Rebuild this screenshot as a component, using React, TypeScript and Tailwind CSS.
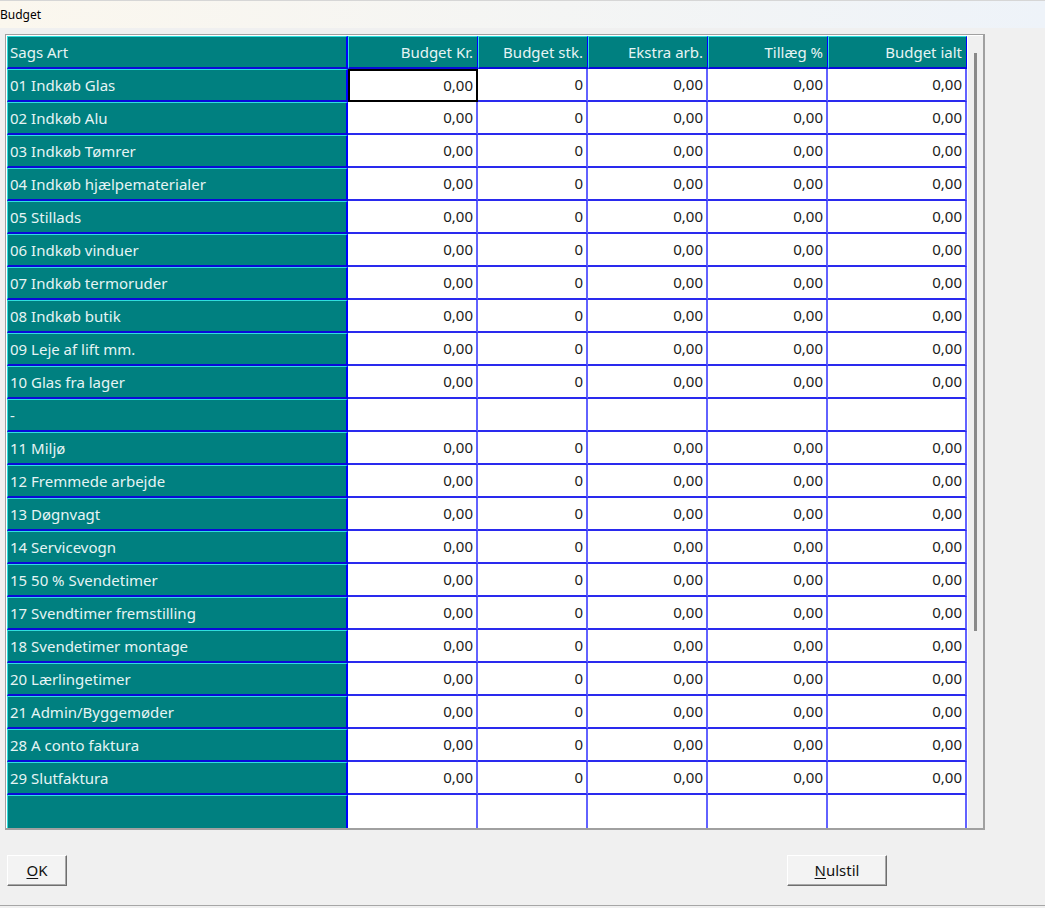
import React from "react";

type Row = { label: string; blank?: boolean };

const ROWS: Row[] = [
  { label: "01 Indkøb Glas" },
  { label: "02 Indkøb Alu" },
  { label: "03 Indkøb Tømrer" },
  { label: "04 Indkøb hjælpematerialer" },
  { label: "05 Stillads" },
  { label: "06 Indkøb vinduer" },
  { label: "07 Indkøb termoruder" },
  { label: "08 Indkøb butik" },
  { label: "09 Leje af lift mm." },
  { label: "10 Glas fra lager" },
  { label: "-", blank: true },
  { label: "11 Miljø" },
  { label: "12 Fremmede arbejde" },
  { label: "13 Døgnvagt" },
  { label: "14 Servicevogn" },
  { label: "15 50 % Svendetimer" },
  { label: "17 Svendtimer fremstilling" },
  { label: "18 Svendetimer montage" },
  { label: "20 Lærlingetimer" },
  { label: "21 Admin/Byggemøder" },
  { label: "28 A conto faktura" },
  { label: "29 Slutfaktura" },
  { label: "", blank: true },
];

const COLS = [
  { title: "Budget Kr.", w: "w-[130px]", value: "0,00" },
  { title: "Budget stk.", w: "w-[110px]", value: "0" },
  { title: "Ekstra arb.", w: "w-[120px]", value: "0,00" },
  { title: "Tillæg %", w: "w-[120px]", value: "0,00" },
  { title: "Budget ialt", w: "w-[139px]", value: "0,00" },
];

function Button({ label, className }: { label: string; className?: string }) {
  return (
    <button
      className={
        "flex h-[31px] items-center justify-center border border-t-white border-l-white border-r-[#6e6e6e] border-b-[#6e6e6e] bg-[#f3f3f3] text-[15px] text-[#111] shadow-[inset_-1px_-1px_0_#a8a8a8] " +
        (className ?? "")
      }
    >
      <span className="underline decoration-1 underline-offset-2 [text-decoration-skip-ink:none]">{label[0]}</span>
      {label.slice(1)}
    </button>
  );
}

export default function App() {
  const last = ROWS.length - 1;
  return (
    <div className="h-[908px] w-[1045px] overflow-hidden bg-[#f0f0f0] font-['Noto_Sans',sans-serif]">
      <div className="flex h-[28px] items-center border-t border-[#d6d6d6] bg-gradient-to-r from-[#fbf7ee] to-[#eef3f9] text-[12px] text-black">
        Budget
      </div>
      <div className="h-[878px] border-b border-[#a6a6a6] pt-[6px]">
        <div className="ml-[5px] flex h-[796px] w-[980px] overflow-hidden border-t border-l border-r-2 border-b-2 border-t-[#a0a0a0] border-l-[#a0a0a0] border-r-[#a0a0a0] border-b-[#a0a0a0] bg-white pl-px pt-px">
          <div className="flex w-[961px] flex-col">
            <div className="flex h-[33px] shrink-0 bg-[#008080] text-[15px] text-[#e6f4f4]">
              <div className="flex w-[341px] items-center border-t border-l border-r-2 border-b-2 border-t-[#30dede] border-l-[#30dede] border-r-[#0000ff] border-b-[#0a0ad8] pl-[2px]">
                Sags Art
              </div>
              {COLS.map((c) => (
                <div
                  key={c.title}
                  className={`${c.w} flex items-center justify-end border-t border-l border-r border-b-2 border-t-[#30dede] border-l-[#30dede] border-r-[#0000ff] border-b-[#0a0ad8] pr-[4px]`}
                >
                  {c.title}
                </div>
              ))}
            </div>
            {ROWS.map((r, i) => (
              <div key={i} className="flex h-[33px] shrink-0 text-[15px]">
                <div
                  className={`flex w-[341px] items-center border-t border-l border-r-2 border-t-[#30dede] border-l-[#30dede] border-r-[#0000ff] bg-[#008080] pl-[2px] text-[#e6f4f4] ${
                    i === last ? "" : "border-b-2 border-b-[#0a0ad8]"
                  }`}
                >
                  {r.label}
                </div>
                {COLS.map((c, j) => {
                  const focus = i === 0 && j === 0;
                  return (
                    <div
                      key={c.title}
                      className={`${c.w} flex items-center justify-end pr-[3px] text-[#1a1a1a] ${
                        focus
                          ? "border-2 border-black"
                          : i === last
                            ? "border-r-2 border-r-[#6262ff]"
                            : "border-r-2 border-b-2 border-r-[#6262ff] border-b-[#2a2aee]"
                      }`}
                    >
                      {r.blank ? "" : c.value}
                    </div>
                  );
                })}
              </div>
            ))}
          </div>
          <div className="flex w-[16px] shrink-0 justify-center border-l border-l-white bg-[#f0f0f0] pt-[17px]">
            <div className="h-[578px] w-[3px] bg-[#8a8a8a]" />
          </div>
        </div>
        <div className="mt-[25px] flex pl-[7px]">
          <Button label="OK" className="w-[60px]" />
          <Button label="Nulstil" className="ml-[720px] w-[100px]" />
        </div>
      </div>
    </div>
  );
}
